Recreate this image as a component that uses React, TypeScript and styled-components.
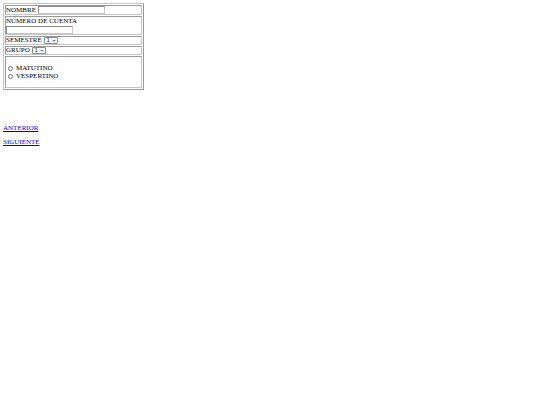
import { createGlobalStyle, styled } from 'styled-components';

const GlobalStyle = createGlobalStyle`
  body {
    margin: 3px;
    background: #ffffff;
    color: #000000;
    font-family: "Liberation Serif", "Times New Roman", serif;
    font-size: 7px;
  }
`;

export default function App() {
  return (
    <>
      <GlobalStyle />
      <St.Page>
        <St.Table>
          <tbody>
            <tr>
              <St.Cell>
                <St.Field>
                  NOMBRE
                  <St.TextInput type='text' />
                </St.Field>
              </St.Cell>
            </tr>
            <tr>
              <St.Cell>
                <St.Field $stacked>
                  NÚMERO DE CUENTA
                  <St.TextInput type='text' />
                </St.Field>
              </St.Cell>
            </tr>
            <tr>
              <St.Cell>
                <St.Field $compact>
                  SEMESTRE
                  <Select />
                </St.Field>
              </St.Cell>
            </tr>
            <tr>
              <St.Cell>
                <St.Field $compact>
                  GRUPO
                  <Select />
                </St.Field>
              </St.Cell>
            </tr>
            <tr>
              <St.Cell>
                <St.RadioGroup>
                  <St.RadioLabel>
                    <St.Radio type='radio' name='turno' />
                    MATUTINO
                  </St.RadioLabel>
                  <St.RadioLabel>
                    <St.Radio type='radio' name='turno' />
                    VESPERTINO
                  </St.RadioLabel>
                </St.RadioGroup>
              </St.Cell>
            </tr>
          </tbody>
        </St.Table>

        <St.Links>
          <St.Link href='#'>ANTERIOR</St.Link>
          <St.Link href='#'>SIGUIENTE</St.Link>
        </St.Links>
      </St.Page>
    </>
  );
}

function Select() {
  return (
    <St.SelectBox>
      <St.SelectInput defaultValue='1'>
        <option value='1'>1</option>
        <option value='2'>2</option>
        <option value='3'>3</option>
      </St.SelectInput>
      <St.Chevron viewBox='0 0 8 5'>
        <path d='M1 1 L4 4 L7 1' fill='none' stroke='#222' strokeWidth='1.6' />
      </St.Chevron>
    </St.SelectBox>
  );
}

const St = {
  Page: styled.div`
    display: flex;
    flex-direction: column;
  `,

  Table: styled.table`
    width: 141px;
    border-collapse: separate;
    border-spacing: 1px;
    border: 1px solid;
    border-color: #c4c4c4 #9a9a9a #9a9a9a #c4c4c4;
  `,

  Cell: styled.td`
    padding: 0;
    border: 1px solid;
    border-color: #9a9a9a #c4c4c4 #c4c4c4 #9a9a9a;
    vertical-align: middle;
  `,

  Field: styled.div<{ $stacked?: boolean; $compact?: boolean }>`
    display: flex;
    flex-direction: ${({ $stacked }) => ($stacked ? 'column' : 'row')};
    align-items: ${({ $stacked }) => ($stacked ? 'flex-start' : 'center')};
    gap: ${({ $stacked }) => ($stacked ? '1px' : '2px')};
    min-height: ${({ $compact }) => ($compact ? '7px' : '8px')};
    line-height: ${({ $compact }) => ($compact ? '7px' : '8px')};
    white-space: nowrap;
  `,

  TextInput: styled.input`
    box-sizing: border-box;
    width: 67px;
    height: 8px;
    margin: 0;
    padding: 0 1px;
    border: 1px solid;
    border-color: #8a8a8a #c8c8c8 #c8c8c8 #8a8a8a;
    font-size: 6px;
  `,

  SelectBox: styled.span`
    position: relative;
    display: block;
  `,

  SelectInput: styled.select`
    appearance: none;
    box-sizing: border-box;
    display: block;
    width: 14px;
    height: 7px;
    margin: 0;
    padding: 0 0 0 2px;
    border: 1px solid #8a8a8a;
    border-radius: 1px;
    background: #ffffff;
    font-family: "Liberation Sans", Arial, sans-serif;
    font-size: 5px;
    line-height: 5px;
    color: #000;
  `,

  Chevron: styled.svg`
    position: absolute;
    right: 2px;
    top: 2px;
    width: 4px;
    height: 3px;
    pointer-events: none;
  `,

  RadioGroup: styled.div`
    display: flex;
    flex-direction: column;
    padding: 7px 0 7px 0;
  `,

  RadioLabel: styled.label`
    display: flex;
    align-items: center;
    gap: 3px;
    line-height: 8px;
  `,

  Radio: styled.input`
    width: 5px;
    height: 5px;
    margin: 0 0 0 2px;
  `,

  Links: styled.div`
    display: flex;
    flex-direction: column;
    align-items: flex-start;
    gap: 6px;
    margin-top: 34px;
  `,

  Link: styled.a`
    color: #0000ee;
    text-decoration: underline;
    line-height: 8px;
  `,
};
